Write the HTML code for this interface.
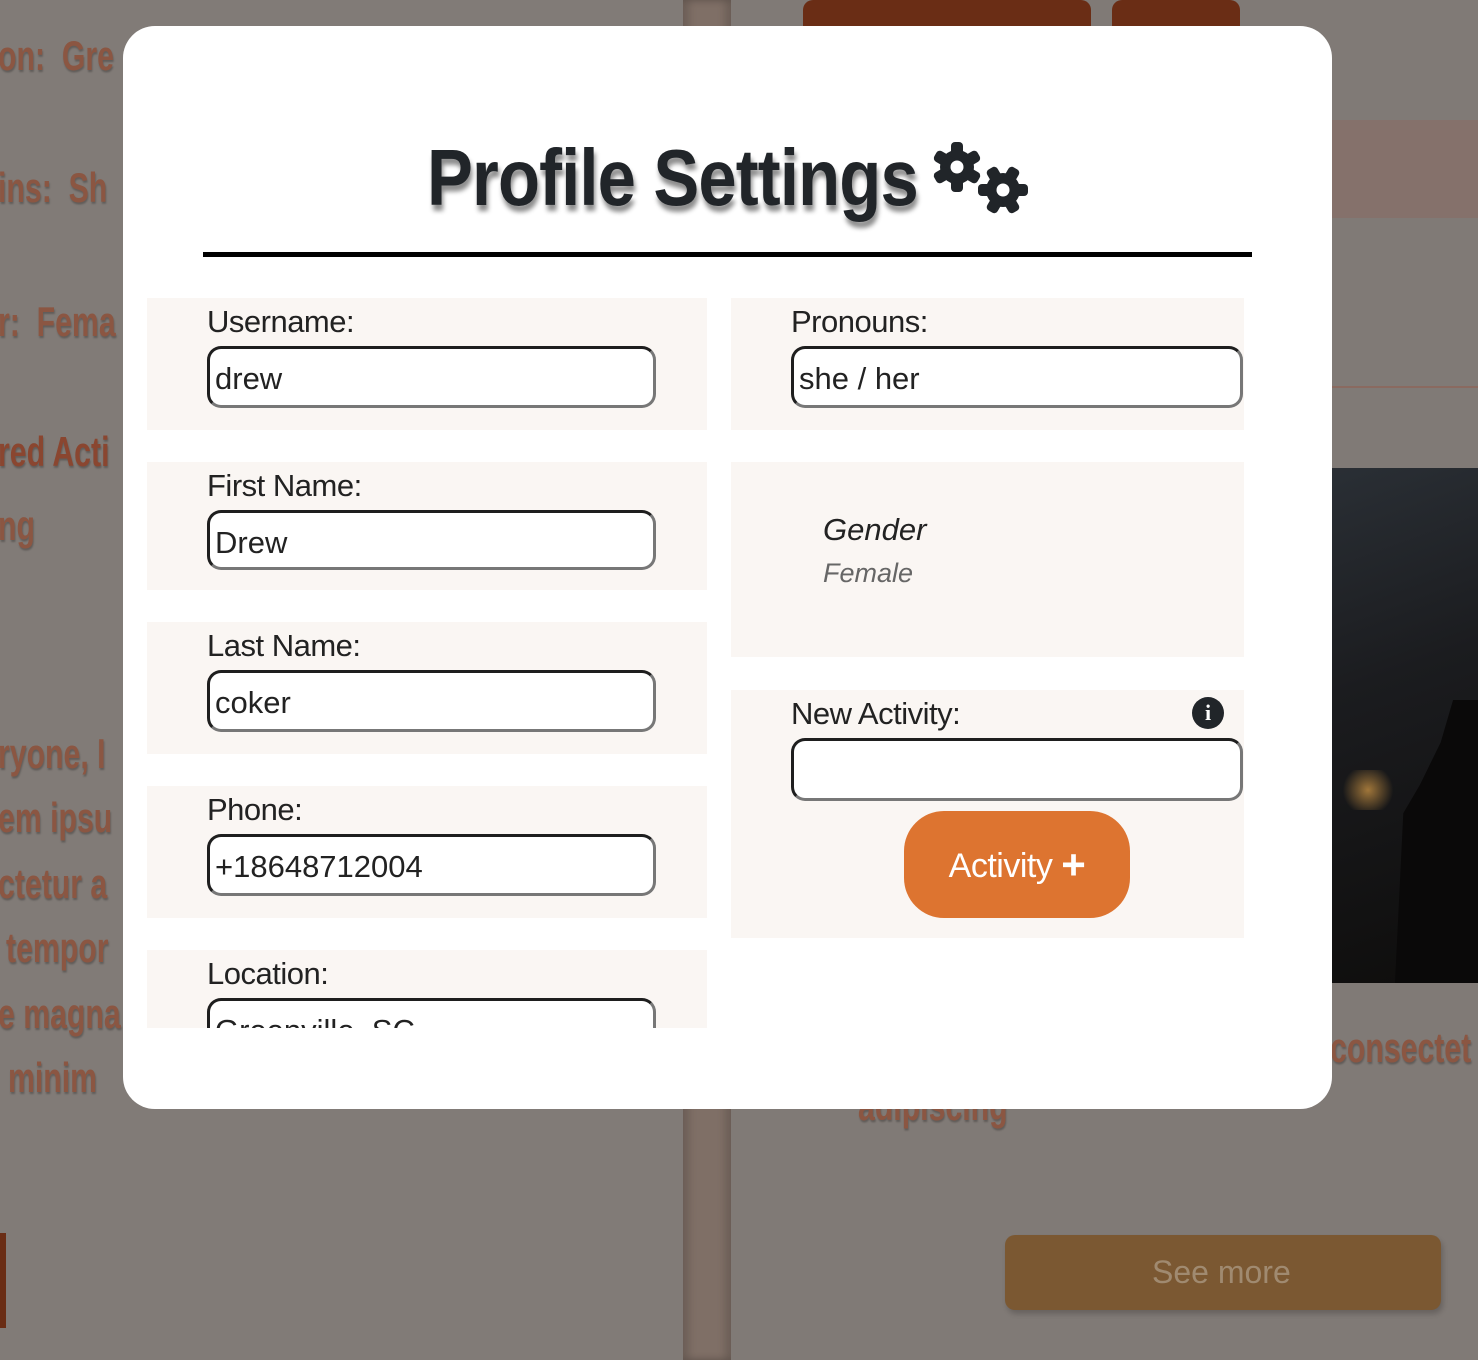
<!DOCTYPE html>
<html><head><meta charset="utf-8">
<style>
*{margin:0;padding:0;box-sizing:border-box}
html,body{width:1478px;height:1360px;overflow:hidden;background:#807a76;font-family:"Liberation Sans",sans-serif}
.bg{position:absolute}
.bt{position:absolute;color:#8b5642;font-family:"Liberation Sans",sans-serif;font-weight:bold;font-size:42px;white-space:nowrap;text-shadow:1px 2px 2px rgba(0,0,0,.25);transform:scaleX(0.72);transform-origin:left top}
.modal{position:absolute;left:123px;top:26px;width:1209px;height:1083px;background:#fff;border-radius:32px}
.title{position:absolute;left:427px;top:132px;font-family:"Liberation Sans",sans-serif;font-weight:bold;font-size:80px;color:#212529;text-shadow:2px 6px 5px rgba(0,0,0,.45);white-space:nowrap;letter-spacing:-1px;transform:scaleX(0.86);transform-origin:left top}
.rule{position:absolute;left:203px;top:252px;width:1049px;height:5px;background:#000}
.box{position:absolute;background:#faf6f3}
.lbl{position:absolute;font-size:31px;color:#222;letter-spacing:-0.5px}
.inp{position:absolute;height:62px;border:3px solid #1e1e1e;border-right-color:#777;border-bottom-color:#777;border-radius:14px;background:#fff;font-size:31px;color:#222;padding:12px 0 0 5px;overflow:hidden;white-space:nowrap}
</style></head><body>
<div class="bg" style="left:0;top:0;width:683px;height:1360px;background:#817b77"></div>
<div class="bg" style="left:683px;top:0;width:48px;height:1360px;background:#7f6f66;box-shadow:inset 6px 0 8px rgba(0,0,0,.15),inset -6px 0 8px rgba(0,0,0,.15)"></div>
<div class="bg" style="left:803px;top:0;width:288px;height:26px;background:#6a2d15;border-radius:10px 10px 0 0"></div>
<div class="bg" style="left:1112px;top:0;width:128px;height:26px;background:#6a2d15;border-radius:10px 10px 0 0"></div>
<div class="bg" style="left:1332px;top:120px;width:146px;height:98px;background:#85716b"></div>
<div class="bg" style="left:1332px;top:386px;width:146px;height:2px;background:#8a6a60"></div>
<div class="bg" style="left:1332px;top:468px;width:146px;height:515px;background:linear-gradient(160deg,#2a2f35 0%,#1b1c1f 40%,#0e0d0c 100%)"></div>
<div class="bg" style="left:1395px;top:700px;width:83px;height:283px;background:#0a0909;clip-path:polygon(70% 0,100% 0,100% 100%,0 100%,10% 40%,30% 30%,55% 15%)"></div>
<div class="bg" style="left:1338px;top:770px;width:60px;height:40px;background:radial-gradient(circle,#a0763a,transparent 70%)"></div>
<div class="bg" style="left:0;top:1233px;width:6px;height:95px;background:#6a2d15"></div>
<div class="bg" style="left:1005px;top:1235px;width:436px;height:75px;background:#7b5832;border-radius:10px;box-shadow:2px 4px 6px rgba(0,0,0,.2)"></div>
<div style="position:absolute;left:1152px;top:1254px;font-size:32px;color:#a08a70">See more</div>
<div class="bt" style="left:-2px;top:32px">on:&nbsp;&nbsp;Gre</div>
<div class="bt" style="left:-2px;top:164px">ins:&nbsp;&nbsp;Sh</div>
<div class="bt" style="left:-2px;top:298px">r:&nbsp;&nbsp;Fema</div>
<div class="bt" style="left:-2px;top:428px;color:#8a4630">red Acti</div>
<div class="bt" style="left:-2px;top:502px">ng</div>
<div class="bt" style="left:-2px;top:730px">ryone, I</div>
<div class="bt" style="left:-2px;top:794px">em ipsu</div>
<div class="bt" style="left:-2px;top:860px">ctetur a</div>
<div class="bt" style="left:6px;top:924px">tempor</div>
<div class="bt" style="left:-2px;top:990px">e magna</div>
<div class="bt" style="left:8px;top:1054px">minim</div>
<div class="bt" style="left:1330px;top:1024px">consectet</div>
<div class="bt" style="left:858px;top:1082px">adipiscing</div>

<div class="modal"></div>
<div class="title">Profile Settings</div>
<svg style="position:absolute;left:930px;top:138px" width="100" height="80" viewBox="0 0 100 80">
 <g fill="#212529">
  <g transform="translate(27,29)">
   <circle r="17"/>
   <rect x="-6" y="-25" width="12" height="50" rx="4"/>
   <rect x="-6" y="-25" width="12" height="50" rx="4" transform="rotate(60)"/>
   <rect x="-6" y="-25" width="12" height="50" rx="4" transform="rotate(120)"/>
   <circle r="6.5" fill="#fff"/>
  </g>
  <g transform="translate(73,52)">
   <circle r="17"/>
   <rect x="-6" y="-25" width="12" height="50" rx="4" transform="rotate(30)"/>
   <rect x="-6" y="-25" width="12" height="50" rx="4" transform="rotate(90)"/>
   <rect x="-6" y="-25" width="12" height="50" rx="4" transform="rotate(150)"/>
   <circle r="6.5" fill="#fff"/>
  </g>
 </g>
</svg>
<div class="rule"></div>

<div style="position:absolute;left:147px;top:298px;width:560px;height:730px;overflow:hidden">
 <div class="box" style="left:0;top:0;width:560px;height:132px"></div>
 <div class="lbl" style="left:60px;top:6px">Username:</div>
 <div class="inp" style="left:60px;top:48px;width:449px">drew</div>
 <div class="box" style="left:0;top:164px;width:560px;height:128px"></div>
 <div class="lbl" style="left:60px;top:170px">First Name:</div>
 <div class="inp" style="left:60px;top:212px;width:449px;height:60px">Drew</div>
 <div class="box" style="left:0;top:324px;width:560px;height:132px"></div>
 <div class="lbl" style="left:60px;top:330px">Last Name:</div>
 <div class="inp" style="left:60px;top:372px;width:449px">coker</div>
 <div class="box" style="left:0;top:488px;width:560px;height:132px"></div>
 <div class="lbl" style="left:60px;top:494px">Phone:</div>
 <div class="inp" style="left:60px;top:536px;width:449px">+18648712004</div>
 <div class="box" style="left:0;top:652px;width:560px;height:132px"></div>
 <div class="lbl" style="left:60px;top:658px">Location:</div>
 <div class="inp" style="left:60px;top:700px;width:449px">Greenville, SC</div>
</div>

<div class="box" style="left:731px;top:298px;width:513px;height:132px"></div>
<div class="lbl" style="left:791px;top:304px">Pronouns:</div>
<div class="inp" style="left:791px;top:346px;width:452px">she / her</div>

<div class="box" style="left:731px;top:462px;width:513px;height:195px"></div>
<div style="position:absolute;left:823px;top:512px;font-size:31px;font-style:italic;color:#222">Gender</div>
<div style="position:absolute;left:823px;top:558px;font-size:27px;font-style:italic;color:#666">Female</div>

<div class="box" style="left:731px;top:690px;width:513px;height:248px"></div>
<div class="lbl" style="left:791px;top:696px">New Activity:</div>
<div style="position:absolute;left:1192px;top:697px;width:32px;height:32px;border-radius:50%;background:#212529;color:#fff;font-family:'Liberation Serif',serif;font-weight:bold;font-size:22px;text-align:center;line-height:32px">i</div>
<div class="inp" style="left:791px;top:738px;width:452px;height:63px"></div>
<div style="position:absolute;left:904px;top:811px;width:226px;height:107px;border-radius:40px;background:#dd7430;color:#fff;font-size:34px;text-align:center;line-height:107px;letter-spacing:-0.5px">Activity <span style="font-size:42px;font-weight:bold;vertical-align:-2px">+</span></div>
</body></html>
